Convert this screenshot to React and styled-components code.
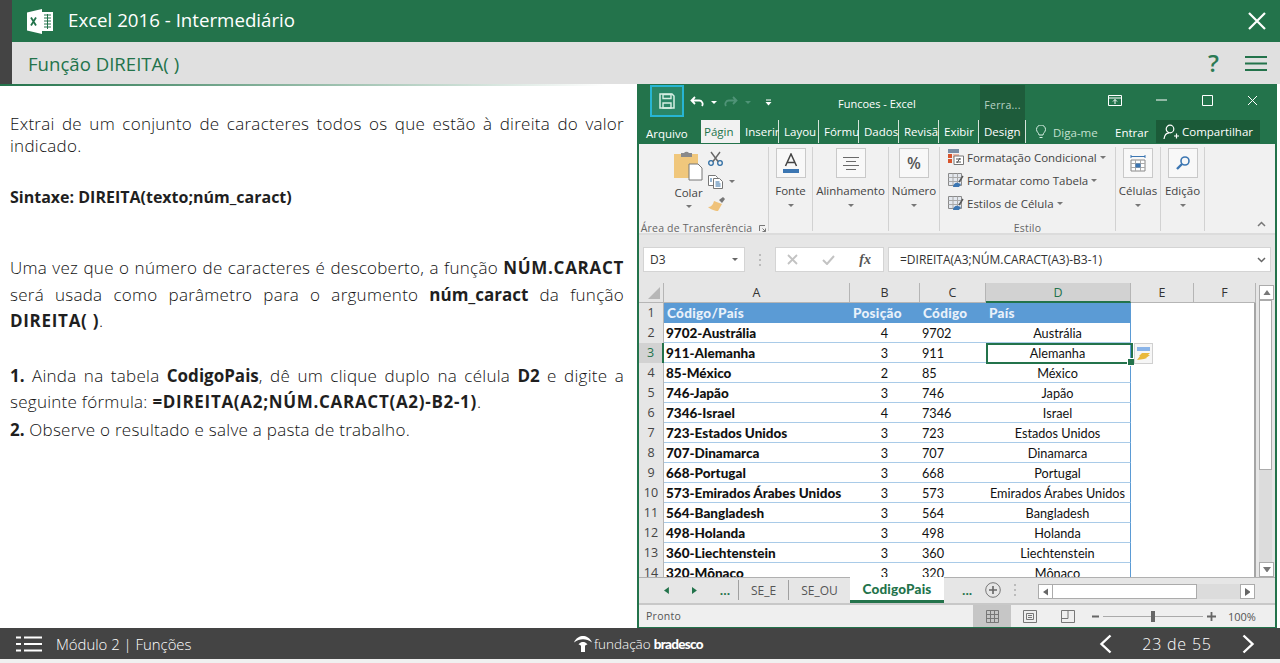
import React from "react";
import styled, { createGlobalStyle } from "styled-components";

const Global = createGlobalStyle`
  html, body { margin: 0; padding: 0; background: #f0f0f0; }
  * { box-sizing: border-box; }
  body { font-family: "Open Sans", "Noto Sans", sans-serif; }
`;

const Page = styled.div`
  width: 1280px; height: 663px; display: flex; flex-direction: column; overflow: hidden; background: #f0f0f0;
`;
const TopBar = styled.header`
  height: 42px; flex: none; background: #23734b; border-left: 12px solid #444; display: flex; align-items: center;
  padding: 0 14px 0 15px; color: #fff;
`;
const TopTitle = styled.h1`
  margin: 0 0 3px 15px; font-size: 18.7px; font-weight: 400; flex: 1;
`;
const SubBar = styled.div`
  height: 42px; flex: none; background: #e0e0e0; border-left: 12px solid #444; display: flex; align-items: center;
  padding: 0 13px 0 16px; color: #23734b;
`;
const SubTitle = styled.h2`
  margin: 0; font-size: 18.6px; font-weight: 400; flex: 1;
`;
const Help = styled.span`
  font-size: 24px; font-weight: 600; color: #2b7a53; margin-right: 26px; line-height: 1;
`;
const Main = styled.main`
  height: 544px; flex: none; background: #fff; display: flex; overflow: hidden;
`;
const Lesson = styled.section`
  width: 637px; flex: none; display: flex; flex-direction: column; padding: 0 13px 0 10px; color: #111;
  font-size: 17px; font-weight: 300; letter-spacing: .27px;
`;
const FadeLine = styled.div`
  height: 2px; margin: 0 -13px 0 -10px; background: linear-gradient(90deg, #23734b, #fff 95%);
`;
const Para = styled.p`
  margin: ${p => p.$top}px 0 0; line-height: ${p => p.$lh}px; text-align: justify;
  b { font-weight: 700; color: #1f1f1f; letter-spacing: 0; }
`;
const Caps = styled.strong`
  font-weight: 700; color: #1f1f1f; letter-spacing: .7px;
`;
const Syntax = styled(Para)`
  text-align: left; font-size: 16px;
`;

const Excel = styled.section`
  width: 640px; flex: none; display: flex; flex-direction: column; background: #e6e6e6;
  border-left: 2px solid #23734b; border-right: 2px solid #23734b; border-bottom: 1px solid #23734b;
  margin-right: 3px; font-size: 11.5px; color: #444; font-family: "Open Sans", sans-serif;
`;
const TitleRow = styled.div`
  height: 36px; flex: none; background: #23734b; display: flex; align-items: stretch; color: #fff; padding-left: 11px;
`;
const SaveBtn = styled.div`
  width: 34px; height: 32px; margin-top: 1px; border: 2px solid #27b5d3; background: #2a8667;
  display: flex; align-items: center; justify-content: center;
`;
const Qat = styled.div`
  display: flex; align-items: center; width: 108px; padding: 0 0 0 6px; gap: 7px;
`;
const Caret = styled.span`
  width: 0; height: 0; flex: none; border-left: 3px solid transparent; border-right: 3px solid transparent;
  border-top: 3px solid ${p => p.$c || "#777"}; margin-right: ${p => p.$mr || 0}px; display: inline-block;
`;
const WinTitle = styled.div`
  width: 188px; font-size: 11px; display: flex; align-items: center; padding: 3px 0 0 46px; white-space: nowrap;
`;
const ToolsTab = styled.div`
  width: 45px; background: #1e5c3b; color: #b9d3c5; font-size: 10.5px; display: flex; align-items: center;
  justify-content: center; padding-top: 5px; margin-top: 1px; letter-spacing: .3px;
`;
const WinCtrls = styled.div`
  flex: 1; display: flex; align-items: center; padding: 0 17px 4px 83px; justify-content: space-between;
`;
const TabRow = styled.div`
  height: 24px; flex: none; background: #23734b; display: flex; align-items: stretch; color: #fff;
`;
const FileTab = styled.div`
  width: 62px; display: flex; align-items: center; padding: 3px 0 0 7px; font-size: 11.5px;
`;
const RTab = styled.div`
  width: ${p => p.$w}px; overflow: hidden; white-space: nowrap; display: flex; align-items: center; padding-left: 5px;
  font-size: 11.5px; height: 23px;
  ${p => p.$active ? "background:#f1f1f1;color:#23734b;padding-left:3px;" : "box-shadow: inset -1px 0 0 #d5e4db;"}
  ${p => p.$dark && "background:#1e5c3b;"}
`;
const TellMe = styled.div`
  width: 79px; margin-left: 10px; display: flex; align-items: center; gap: 7px; color: #c4e0d0; white-space: nowrap;
`;
const Login = styled.div`
  width: 41px; display: flex; align-items: center; white-space: nowrap;
`;
const Share = styled.div`
  width: 104px; height: 23px; background: #1b5a38; display: flex; align-items: center; gap: 3px; padding-left: 7px;
`;
const Ribbon = styled.div`
  height: 91px; flex: none; background: #f1f1f1; border-bottom: 2px solid #dcdcdc; display: flex; position: relative;
`;
const Group = styled.div`
  width: ${p => p.$w}px; flex: none; margin: 3px 0 2px; border-right: 1px solid #d2d2d2; display: flex; flex-direction: column;
  align-items: center;
`;
const BigBox = styled.div`
  width: 30px; height: 30px; flex: none; margin-top: 1px; border: 1px solid #c9c9c9; background: #f8f8f8;
  display: flex; align-items: center; justify-content: center;
`;
const GLabel = styled.div`
  margin-top: ${p => p.$mt ?? 5}px; height: 15px; line-height: 15px; white-space: nowrap; color: #444;
`;
const DropRow = styled.div`
  height: ${p => p.$h || 15}px; display: flex; align-items: center;
`;
const GroupFoot = styled.div`
  margin-top: auto; margin-bottom: -4px; height: 14px; line-height: 13px; font-size: 10.5px; color: #666; white-space: nowrap; letter-spacing: .2px;
  display: flex; align-items: center; gap: 7px;
`;
const ClipBody = styled.div`
  flex: 1; width: 100%; display: flex; padding: 3px 0 0 33px;
`;
const ClipMain = styled.div`
  width: 33px; display: flex; flex-direction: column; align-items: center;
`;
const ClipSide = styled.div`
  margin-left: 3px; padding-top: 1px; display: flex; flex-direction: column; gap: 8px;
`;
const SideRow = styled.div`
  display: flex; align-items: center; gap: 6px; height: 15px;
`;
const StyleList = styled.div`
  flex: 1; width: 100%; padding: 1px 0 0 8px; display: flex; flex-direction: column; gap: 5px;
`;
const StyleRow = styled.div`
  height: 18px; display: flex; align-items: center; gap: 3px; white-space: nowrap; color: #444;
`;
const Collapse = styled.div`
  position: absolute; right: 9px; bottom: 3px;
`;

const FormulaBar = styled.div`
  height: 48px; flex: none; padding: 12px 4px 11px 4px; display: flex; align-items: stretch;
`;
const NameBox = styled.div`
  width: 102px; background: #fff; border: 1px solid #d4d4d4; display: flex; align-items: center; padding: 0 6px;
  justify-content: space-between; color: #333; font-size: 12px;
`;
const Dots = styled.div`
  width: 30px; display: flex; align-items: center; justify-content: center;
`;
const FxBox = styled.div`
  width: 109px; background: #fff; border: 1px solid #d4d4d4; display: flex; align-items: center; justify-content: space-between;
  padding: 0 12px 0 11px; color: #bbb;
`;
const FInput = styled.div`
  flex: 1; margin-left: 4px; background: #fff; border: 1px solid #d4d4d4; display: flex; align-items: center;
  justify-content: space-between; padding: 0 4px 0 11px; color: #333; font-size: 12px;
`;
const SheetWrap = styled.div`
  height: 294px; flex: none; display: flex; overflow: hidden;
`;
const Sheet = styled.div`
  width: 617px; flex: none; display: grid; overflow: hidden; position: relative; align-content: start;
  grid-template-columns: 25px 186px 70px 66px 145px 63px 62px;
  grid-auto-rows: 20px;
  font-family: Lato, "Liberation Sans", sans-serif; font-size: 12.7px; color: #111;
`;
const Corner = styled.div`
  height: 20px; background: #e6e6e6; border-right: 1px solid #b5b5b5; border-bottom: 1px solid #b5b5b5; display: flex;
  justify-content: flex-end; align-items: flex-end; padding: 0 3px 3px 0;
`;
const ColHead = styled.div`
  background: ${p => p.$on ? "#d2d2d2" : "#e6e6e6"}; color: ${p => p.$on ? "#23734b" : "#333"}; text-align: center; font-size: 12.5px;
  font-family: "Open Sans", sans-serif; line-height: 19px; border-right: 1px solid #b5b5b5;
  border-bottom: ${p => p.$on ? "2px solid #23734b" : "1px solid #b5b5b5"};
`;
const RowHead = styled.div`
  background: ${p => p.$on ? "#d2d2d2" : "#e6e6e6"}; color: ${p => p.$on ? "#23734b" : "#444"}; text-align: center; font-size: 12.5px;
  font-family: "Open Sans", sans-serif; line-height: 20px;
  border-right: ${p => p.$on ? "2px solid #23734b" : "1px solid #b5b5b5"};
`;
const Cell = styled.div`
  padding: 0 3px 0 ${p => p.$head ? 3 : 2}px; line-height: 20px; white-space: nowrap; overflow: hidden;
  background: ${p => p.$head ? "#5b9bd5" : "#fff"};
  color: ${p => p.$head ? "#e9f1fa" : "#111"};
  font-weight: ${p => p.$bold ? 900 : 400};
  font-size: ${p => p.$bold ? 13.5 : 12.7}px;
  letter-spacing: ${p => p.$head ? ".3px" : "0"};
  text-align: ${p => p.$center ? "center" : "left"};
  border-bottom: ${p => p.$head ? "none" : "1px solid #a9cbe8"};
  ${p => p.$edge && "border-right: 1px solid #5b9bd5;"}
`;
const Blank = styled.div`
  background: #fff; ${p => p.$edge && "border-right: 2px solid #a5a5a5;"}
`;
const SelBox = styled.div`
  position: absolute; left: 347px; top: 60px; width: 147px; height: 21px; border: 2px solid #23734b; pointer-events: none;
  &::after { content: ""; position: absolute; right: -4px; bottom: -4px; width: 6px; height: 6px; background: #23734b; border: 1px solid #fff; }
`;
const QuickTag = styled.div`
  position: absolute; left: 495px; top: 60px; width: 19px; height: 21px; background: #f6f6f6; border: 1px solid #d0d0d0;
  display: flex; align-items: center; justify-content: center;
`;
const VScroll = styled.div`
  width: 19px; flex: none; padding: 2px 3px 0 3px; display: flex; flex-direction: column;
`;
const SBtn = styled.div`
  width: 15px; height: 15px; flex: none; background: #fff; border: 1px solid #ababab; display: flex; align-items: center; justify-content: center;
`;
const VThumb = styled.div`
  height: 170px; flex: none; background: #fff; border: 1px solid #ababab;
`;
const VTrack = styled.div`
  flex: 1; background: #dcdcdc;
`;
const SheetTabs = styled.div`
  height: 28px; flex: none; display: flex; align-items: stretch; background: #e6e6e6; border-bottom: 2px solid #c8c8c8;
  box-shadow: inset 0 1px 0 #b0b0b0; font-size: 12px;
`;
const NavZone = styled.div`
  width: 99px; display: flex; align-items: center; padding-left: 25px; gap: 23px; color: #23734b; font-weight: 700;
`;
const Sep = styled.div`
  width: 1px; height: 20px; background: #a0a0a0; align-self: center;
`;
const STab = styled.div`
  width: ${p => p.$w}px; display: flex; align-items: center; justify-content: center; color: #555;
  ${p => p.$active && "background:#fff;color:#23734b;border-bottom:3px solid #23734b;font-size:13.5px;letter-spacing:.2px;padding-top:1px;font-family:Lato,sans-serif;font-weight:900;"}
`;
const AfterTabs = styled.div`
  width: 94px; display: flex; align-items: center; padding-left: 18px; gap: 13px; color: #23734b; font-weight: 700;
`;
const HScroll = styled.div`
  width: 217px; height: 15px; margin-top: 7px; display: flex;
`;
const HThumb = styled.div`
  width: 144px; height: 15px; background: #fff; border: 1px solid #ababab; border-left: none;
`;
const StatusBar = styled.div`
  flex: 1; background: #efefef; display: flex; align-items: center; font-size: 10.5px; color: #555; padding-left: 7px; letter-spacing: .3px;
`;
const StatusText = styled.div`
  width: 327px;
`;
const ViewBtn = styled.div`
  width: 38px; align-self: stretch; display: flex; align-items: center; justify-content: center;
  ${p => p.$on && "background:#c6c6c6;"}
`;
const Zoom = styled.div`
  display: flex; align-items: center; margin-left: 5px; gap: 4px; font-size: 14px; color: #666;
`;
const Slider = styled.div`
  width: 100px; height: 1px; background: #aaa; position: relative;
  &::after { content: ""; position: absolute; left: 48px; top: -5px; width: 4px; height: 11px; background: #666; }
`;
const ZoomPct = styled.div`
  margin-left: 12px; font-size: 11px; color: #555; letter-spacing: 0;
`;
const Footer = styled.footer`
  height: 31px; flex: none; background: #444; display: flex; align-items: center; color: #fff; padding-left: 16px;
`;
const FootLeft = styled.div`
  width: 557px; display: flex; align-items: center; gap: 14px; font-size: 14.9px; font-weight: 300;
`;
const Brand = styled.div`
  width: 526px; display: flex; align-items: center; gap: 1px; font-size: 13.5px; font-weight: 300;
  b { font-family: Lato, sans-serif; font-weight: 900; letter-spacing: -.7px; margin-left: 2px; }
`;
const Pager = styled.div`
  display: flex; align-items: center; font-size: 16px; font-weight: 300; letter-spacing: .8px;
`;
const PagerNum = styled.div`
  width: 130px; text-align: center;
`;

const Svg = ({ w, h, children, ...r }) => <svg width={w} height={h} viewBox={`0 0 ${w} ${h}`} fill="none" {...r}>{children}</svg>;

const ExcelLogo = () => (
  <Svg w={26} h={25}>
    <path d="M0 3.5 15 0v25L0 21.5z" fill="#fff" />
    <path d="M15 3h11v19H15z" fill="#fff" />
    <path d="M17 6h7M17 9h7M17 12h7M17 15h7M17 18h7M20.5 5v15" stroke="#23734b" />
    <path d="M4 8.5l5 8M9 8.5l-5 8" stroke="#23734b" strokeWidth="1.8" />
  </Svg>
);
const CloseX = ({ s = 18, c = "#fff", sw = 2.2 }) => (
  <Svg w={s} h={s}><path d={`M1 1 ${s - 1} ${s - 1}M${s - 1} 1 1 ${s - 1}`} stroke={c} strokeWidth={sw} /></Svg>
);
const Burger = () => (
  <Svg w={22} h={15}><path d="M0 1h22M0 7.500h22M0 14h22" stroke="#23734b" strokeWidth="2" /></Svg>
);
const SaveIcon = () => (
  <Svg w={16} h={16}>
    <path d="M1 1h12l2 2v12H1z" stroke="#d7efe4" strokeWidth="1.5" />
    <path d="M4 1.5h8v4H4zM4 10h8v5H4z" stroke="#d7efe4" strokeWidth="1.4" />
  </Svg>
);
const Undo = ({ c = "#fff" }) => (
  <Svg w={14} h={12}><path d="M5 1 1.5 4.5 5 8M2 4.5h7a3.5 3.5 0 0 1 3 5.5" stroke={c} strokeWidth="1.8" /></Svg>
);
const Redo = () => (
  <Svg w={14} h={12}><path d="M9 1l3.5 3.5L9 8M12 4.5H5a3.5 3.5 0 0 0-3 5.5" stroke="#4f9377" strokeWidth="1.8" /></Svg>
);
const Customize = () => (
  <Svg w={7} h={7}><path d="M1 1h5" stroke="#fff" /><path d="M0.5 3h6L3.5 6.5z" fill="#fff" /></Svg>
);
const RibbonDisplay = () => (
  <Svg w={14} h={11}><path d="M.5.5h13v10H.5zM.5 3h13" stroke="#fff" /><path d="M7 9V4.5M5 6.5l2-2 2 2" stroke="#fff" /></Svg>
);
const Bulb = () => (
  <Svg w={10} h={14}><path d="M3 10c0-2-2.5-3-2.5-5.5a4.5 4.5 0 0 1 9 0C9.500 7 7 8 7 10zM3.500 12.500h3" stroke="#d7efe4" /></Svg>
);
const Person = () => (
  <Svg w={16} h={16}><circle cx="7" cy="5" r="3.800" stroke="#fff" strokeWidth="1.200" /><path d="M1 15c.5-4 2.500-6 5-6.200M11 12h5M13.500 9.500v5" stroke="#fff" strokeWidth="1.200" /></Svg>
);
const Paste = () => (
  <Svg w={29} h={31}>
    <path d="M0 4h24v24H0z" fill="#f0c77c" />
    <path d="M7 3h3a3 3 0 0 1 5 0h3v4H7z" fill="#8a8a8a" />
    <path d="M15 14h9l4 4v12H15z" fill="#fff" stroke="#777" />
  </Svg>
);
const Scissors = () => (
  <Svg w={15} h={15}><circle cx="3" cy="12" r="2.300" stroke="#2e6da4" strokeWidth="1.300" /><circle cx="12" cy="12" r="2.300" stroke="#2e6da4" strokeWidth="1.300" /><path d="M3 1l7 9.500M12 1 5 10.500" stroke="#666" strokeWidth="1.400" /></Svg>
);
const Copy = () => (
  <Svg w={15} h={14}><path d="M.5.5h7l2 2v8h-9z" fill="#fff" stroke="#777" /><path d="M5.500 3.500h6l3 3v7h-9z" fill="#fff" stroke="#777" /><path d="M2 4h2M2 6h2M7.500 7h4M7.500 9h5M7.500 11h5" stroke="#2e6da4" /></Svg>
);
const Brush = () => (
  <Svg w={17} h={15}><path d="M11 3 15 0l2 2-3 4z" fill="#777" /><path d="M6 4l8 3-4 7c-3 0-8-2-10-4 3 0 5-2 6-6z" fill="#efc27a" /></Svg>
);
const FontA = () => (
  <Svg w={20} h={21}><path d="M4.500 13 10 1l5.500 12M6.500 9.500h7" stroke="#444" strokeWidth="1.500" /><path d="M2 16h16v4H2z" fill="#3c76b2" /></Svg>
);
const AlignIcon = () => (
  <Svg w={16} h={13}><path d="M0 .5h16M3 4.500h10M0 8.500h16M3 12.500h10" stroke="#6a6a6a" /></Svg>
);
const PercentMark = styled.span`
  font-size: 16px; color: #555; font-weight: 600;
`;
const CondIcon = () => (
  <Svg w={16} h={16}><path d="M0 0h11v4H0z" fill="#7b8ea5" /><path d="M0 5h4v4H0zM0 10h4v4H0z" fill="#d8542c" /><path d="M5 5h6v4H5z" fill="#f0b9a6" /><path d="M6 7h9.500v8.500H6z" fill="#fff" stroke="#777" /><path d="M8 10h5M8 13h5M12 9l-3 5" stroke="#555" /></Svg>
);
const TableIcon = () => (
  <Svg w={16} h={15}><path d="M.5.500h13v12H.5z" fill="#e4e8ee" stroke="#8a8a8a" /><path d="M.5 4.500h13M.5 8.500h13M5 .5v12M9.500.5v12" stroke="#a8a8a8" /><path d="M5 14c0-3 3-5 5-4l3 1-2 3z" fill="#3c76b2" /><path d="M11 9l4-6" stroke="#555" strokeWidth="1.400" /></Svg>
);
const CellsIcon = () => (
  <Svg w={16} h={19}><path d="M1 1v3M15 1v3M1 2.500h14" stroke="#3c76b2" /><path d="M1 6h14v11H1z" fill="#fff" stroke="#888" /><path d="M1 9.500h14M1 13.500h14M5.500 6v11M10.500 6v11" stroke="#aaa" /><path d="M5.500 9.500h5v4h-5z" fill="#3c76b2" /></Svg>
);
const Magnifier = () => (
  <Svg w={14} h={14}><circle cx="9" cy="5" r="4" stroke="#3c76b2" strokeWidth="1.600" /><path d="M6 8 1 13" stroke="#3c76b2" strokeWidth="2.400" /></Svg>
);
const Launcher = () => (
  <Svg w={7} h={7}><path d="M.5 6V.5H6M6.500 6.500l-3-3M3.500 6.500h3v-3" stroke="#777" /></Svg>
);
const ChevUp = () => (
  <Svg w={9} h={6}><path d="M1 5l3.500-3.500L8 5" stroke="#777" strokeWidth="1.500" /></Svg>
);
const ChevDown = () => (
  <Svg w={9} h={6}><path d="M1 1l3.500 3.500L8 1" stroke="#666" strokeWidth="1.500" /></Svg>
);
const GripV = () => (
  <Svg w={2} h={12}><path d="M1 0v2M1 5v2M1 10v2" stroke="#bbb" strokeWidth="2" /></Svg>
);
const Check = () => (
  <Svg w={13} h={10}><path d="M1 5l4 4 7-8" stroke="#c3c3c3" strokeWidth="2" /></Svg>
);
const FxMark = styled.i`
  font-family: "Liberation Serif", serif; color: #555; font-size: 14px; font-weight: 700;
`;
const Tri = ({ dir = "up", c = "#777", s = 3 }) => {
  const paths = {
    up: `M0 ${s * 1.400}L${s} 0 ${s * 2} ${s * 1.400}z`,
    down: `M0 0L${s} ${s * 1.400} ${s * 2} 0z`,
    left: `M${s * 1.400} 0L0 ${s} ${s * 1.400} ${s * 2}z`,
    right: `M0 0L${s * 1.400} ${s} 0 ${s * 2}z`,
  };
  const v = dir === "up" || dir === "down";
  return <Svg w={v ? s * 2 : s * 1.400} h={v ? s * 1.400 : s * 2}><path d={paths[dir]} fill={c} /></Svg>;
};
const CornerMark = () => <Svg w={12} h={12}><path d="M12 0v12H0z" fill="#b7b7b7" /></Svg>;
const Flash = () => (
  <Svg w={15} h={15}><path d="M1 1h13v4H1z" fill="#8ab4e8" /><path d="M1 14l3-4H3l3-3h8l-2 2h2l-4 3h1l-3 1z" fill="#e9b93c" /></Svg>
);
const PlusCircle = () => (
  <Svg w={16} h={16}><circle cx="8" cy="8" r="7.300" stroke="#777" /><path d="M4 8h8M8 4v8" stroke="#666" strokeWidth="1.600" /></Svg>
);
const ViewNormal = () => (
  <Svg w={13} h={13}><path d="M.5.5h12v12H.5zM.5 4.500h12M.5 8.500h12M4.500.5v12M8.500.5v12" stroke="#777" /></Svg>
);
const ViewPage = () => (
  <Svg w={14} h={13}><path d="M.5.5h13v12H.5z" stroke="#777" /><path d="M3.500 3.500h7v6h-7zM5 5.500h4M5 7.500h4" stroke="#777" /></Svg>
);
const ViewBreak = () => (
  <Svg w={14} h={13}><path d="M.5.5h13v12H.5zM.5 8.500h6.500V.5" stroke="#777" /></Svg>
);
const ListIcon = () => (
  <Svg w={26} h={16}>
    <path d="M0 1.500h5M8 1.500h18M0 8h5M8 8h18M0 14.500h5M8 14.500h18" stroke="#fff" strokeWidth="2" />
  </Svg>
);
const BradescoMark = () => (
  <Svg w={20} h={18}>
    <path d="M1 7.500C3 2.500 7 1 10 1s7 1.500 9 6.500C16 5 13 4.300 10 4.300S4 5 1 7.500z" fill="#fff" />
    <path d="M5.500 9.500c1.500-2 3-2.500 4.500-2.500s3 .5 4.500 2.500c-1.200.3-2.300.6-2.500 1.500v6H8v-6c-.2-.9-1.300-1.200-2.500-1.500z" fill="#fff" />
  </Svg>
);
const PagerArrow = ({ right }) => (
  <Svg w={13} h={20}><path d={right ? "M1.500 1.500l9 8.500-9 8.500" : "M11.500 1.500l-9 8.500 9 8.500"} stroke="#fff" strokeWidth="2.400" /></Svg>
);

const rows = [
  ["9702-Austrália", "4", "9702", "Austrália"],
  ["911-Alemanha", "3", "911", "Alemanha"],
  ["85-México", "2", "85", "México"],
  ["746-Japão", "3", "746", "Japão"],
  ["7346-Israel", "4", "7346", "Israel"],
  ["723-Estados Unidos", "3", "723", "Estados Unidos"],
  ["707-Dinamarca", "3", "707", "Dinamarca"],
  ["668-Portugal", "3", "668", "Portugal"],
  ["573-Emirados Árabes Unidos", "3", "573", "Emirados Árabes Unidos"],
  ["564-Bangladesh", "3", "564", "Bangladesh"],
  ["498-Holanda", "3", "498", "Holanda"],
  ["360-Liechtenstein", "3", "360", "Liechtenstein"],
  ["320-Mônaco", "3", "320", "Mônaco"],
];

const tabs = [["Págin", 39, true], ["Inserir", 39], ["Layou", 40], ["Fórmu", 40], ["Dados", 40], ["Revisã", 40], ["Exibir", 40], ["Design", 47, false, true]];

export default function App() {
  return (
    <Page>
      <Global />
      <TopBar>
        <ExcelLogo />
        <TopTitle>Excel 2016 - Intermediário</TopTitle>
        <CloseX />
      </TopBar>
      <SubBar>
        <SubTitle>Função DIREITA( )</SubTitle>
        <Help>?</Help>
        <Burger />
      </SubBar>
      <Main>
        <Lesson>
          <FadeLine />
          <Para $top={27} $lh={22}>Extrai de um conjunto de caracteres todos os que estão à direita do valor indicado.</Para>
          <Syntax $top={29} $lh={22}><b>Sintaxe: DIREITA(texto;núm_caract)</b></Syntax>
          <Para $top={47} $lh={26.7}>Uma vez que o número de caracteres é descoberto, a função <Caps>NÚM.CARACT</Caps> será usada como parâmetro para o argumento <b>núm_caract</b> da função <Caps>DIREITA( )</Caps>.</Para>
          <Para $top={27.6} $lh={26.7}><b>1.</b> Ainda na tabela <b>CodigoPais</b>, dê um clique duplo na célula <b>D2</b> e digite a seguinte fórmula: <Caps>=DIREITA(A2;NÚM.CARACT(A2)-B2-1)</Caps>.</Para>
          <Para $top={0.6} $lh={26.7}><b>2.</b> Observe o resultado e salve a pasta de trabalho.</Para>
        </Lesson>
        <Excel>
          <TitleRow>
            <SaveBtn><SaveIcon /></SaveBtn>
            <Qat>
              <Undo /><Caret $c="#fff" />
              <Redo /><Caret $c="#4f9377" $mr={7} />
              <Customize />
            </Qat>
            <WinTitle>Funcoes - Excel</WinTitle>
            <ToolsTab>Ferra...</ToolsTab>
            <WinCtrls>
              <RibbonDisplay />
              <Svg w={11} h={2}><path d="M0 1h11" stroke="#fff" /></Svg>
              <Svg w={11} h={11}><path d="M.5.5h10v10H.5z" stroke="#fff" /></Svg>
              <CloseX s={11} sw={1} />
            </WinCtrls>
          </TitleRow>
          <TabRow>
            <FileTab>Arquivo</FileTab>
            {tabs.map(([t, w, a, d]) => <RTab key={t} $w={w} $active={a} $dark={d}>{t}</RTab>)}
            <TellMe><Bulb />Diga-me</TellMe>
            <Login>Entrar</Login>
            <Share><Person />Compartilhar</Share>
          </TabRow>
          <Ribbon>
            <Group $w={130}>
              <ClipBody>
                <ClipMain>
                  <Paste />
                  <GLabel $mt={4}>Colar</GLabel>
                  <DropRow $h={13}><Caret /></DropRow>
                </ClipMain>
                <ClipSide>
                  <SideRow><Scissors /></SideRow>
                  <SideRow><Copy /><Caret /></SideRow>
                  <SideRow><Brush /></SideRow>
                </ClipSide>
              </ClipBody>
              <GroupFoot>Área de Transferência <Launcher /></GroupFoot>
            </Group>
            <Group $w={44}>
              <BigBox><FontA /></BigBox>
              <GLabel>Fonte</GLabel>
              <DropRow><Caret /></DropRow>
            </Group>
            <Group $w={76}>
              <BigBox><AlignIcon /></BigBox>
              <GLabel>Alinhamento</GLabel>
              <DropRow><Caret /></DropRow>
            </Group>
            <Group $w={51}>
              <BigBox><PercentMark>%</PercentMark></BigBox>
              <GLabel>Número</GLabel>
              <DropRow><Caret /></DropRow>
            </Group>
            <Group $w={176}>
              <StyleList>
                <StyleRow><CondIcon />Formatação Condicional <Caret /></StyleRow>
                <StyleRow><TableIcon />Formatar como Tabela <Caret /></StyleRow>
                <StyleRow><TableIcon />Estilos de Célula <Caret /></StyleRow>
              </StyleList>
              <GroupFoot>Estilo</GroupFoot>
            </Group>
            <Group $w={45}>
              <BigBox><CellsIcon /></BigBox>
              <GLabel>Células</GLabel>
              <DropRow><Caret /></DropRow>
            </Group>
            <Group $w={44}>
              <BigBox><Magnifier /></BigBox>
              <GLabel>Edição</GLabel>
              <DropRow><Caret /></DropRow>
            </Group>
            <Collapse><ChevUp /></Collapse>
          </Ribbon>
          <FormulaBar>
            <NameBox>D3 <Caret $c="#666" /></NameBox>
            <Dots><GripV /></Dots>
            <FxBox><CloseX s={11} c="#c3c3c3" sw={1.800} /><Check /><FxMark>fx</FxMark></FxBox>
            <FInput>=DIREITA(A3;NÚM.CARACT(A3)-B3-1) <ChevDown /></FInput>
          </FormulaBar>
          <SheetWrap>
            <Sheet>
              <Corner><CornerMark /></Corner>
              <ColHead>A</ColHead><ColHead>B</ColHead><ColHead>C</ColHead><ColHead $on>D</ColHead><ColHead>E</ColHead><ColHead>F</ColHead>
              <RowHead>1</RowHead>
              <Cell $head $bold>Código/País</Cell>
              <Cell $head $bold>Posição</Cell>
              <Cell $head $bold>Código</Cell>
              <Cell $head $bold>País</Cell>
              <Blank /><Blank $edge />
              {rows.map((r, i) => (
                <React.Fragment key={r[0]}>
                  <RowHead $on={i === 1}>{i + 2}</RowHead>
                  <Cell $bold>{r[0]}</Cell>
                  <Cell $center>{r[1]}</Cell>
                  <Cell>{r[2]}</Cell>
                  <Cell $center $edge>{r[3]}</Cell>
                  <Blank /><Blank $edge />
                </React.Fragment>
              ))}
              <SelBox />
              <QuickTag><Flash /></QuickTag>
            </Sheet>
            <VScroll>
              <SBtn><Tri dir="up" s={4} /></SBtn>
              <VThumb />
              <VTrack />
              <SBtn><Tri dir="down" s={4} /></SBtn>
            </VScroll>
          </SheetWrap>
          <SheetTabs>
            <NavZone>
              <Tri dir="left" c="#23734b" s={3.500} />
              <Tri dir="right" c="#23734b" s={3.500} />
              <span>...</span>
            </NavZone>
            <Sep />
            <STab $w={49}>SE_E</STab>
            <Sep />
            <STab $w={61}>SE_OU</STab>
            <STab $w={94} $active>CodigoPais</STab>
            <AfterTabs>
              <span>...</span><PlusCircle /><GripV />
            </AfterTabs>
            <HScroll>
              <SBtn><Tri dir="left" s={4} c="#666" /></SBtn>
              <HThumb />
              <VTrack />
              <SBtn><Tri dir="right" s={4} c="#666" /></SBtn>
            </HScroll>
          </SheetTabs>
          <StatusBar>
            <StatusText>Pronto</StatusText>
            <ViewBtn $on><ViewNormal /></ViewBtn>
            <ViewBtn><ViewPage /></ViewBtn>
            <ViewBtn><ViewBreak /></ViewBtn>
            <Zoom>
              <Svg w={7} h={3}><path d="M0 1.500h7" stroke="#666" strokeWidth="2" /></Svg>
              <Slider />
              <Svg w={9} h={9}><path d="M0 4.500h9M4.500 0v9" stroke="#666" strokeWidth="1.800" /></Svg>
            </Zoom>
            <ZoomPct>100%</ZoomPct>
          </StatusBar>
        </Excel>
      </Main>
      <Footer>
        <FootLeft><ListIcon />Módulo 2 | Funções</FootLeft>
        <Brand><BradescoMark />fundação<b>bradesco</b></Brand>
        <Pager>
          <PagerArrow />
          <PagerNum>23 de 55</PagerNum>
          <PagerArrow right />
        </Pager>
      </Footer>
    </Page>
  );
}
